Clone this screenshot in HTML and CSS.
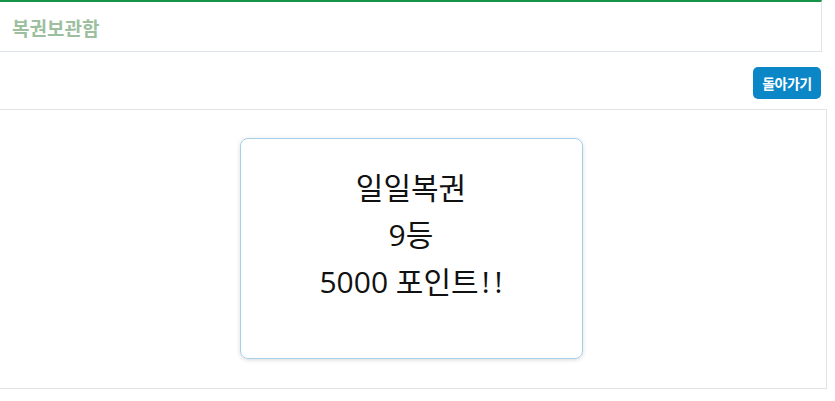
FILE: index.html
```html
<!DOCTYPE html>
<html lang="ko">
<head>
<meta charset="utf-8">
<link rel="stylesheet" href="styles.css">
</head>
<body>
<div class="page">
  <div class="head-box">
    <h1 class="title">복권보관함</h1>
  </div>
  <div class="actions">
    <button class="back-btn">돌아가기</button>
  </div>
  <div class="content-box">
    <div class="ticket">
      <p class="line">일일복권</p>
      <p class="line">9등</p>
      <p class="line">5000 포인트<span class="bang">!</span>!</p>
    </div>
  </div>
</div>
</body>
</html>
```

FILE: styles.css
```css
html, body {
  margin: 0;
  padding: 0;
  background: #fff;
}
body {
  font-family: "Open Sans", "Noto Sans CJK KR", sans-serif;
  color: #111;
}
.page {
  width: 827px;
}
.head-box {
  box-sizing: border-box;
  width: 822px;
  height: 52px;
  border-top: 2px solid #179447;
  border-right: 1px solid #dfe3ea;
  border-bottom: 1px solid #dfe3ea;
  display: flex;
  align-items: center;
  padding-left: 12px;
}
.title {
  margin: 0;
  padding-top: 1px;
  font-family: "Noto Sans CJK KR", sans-serif;
  font-size: 19px;
  font-weight: 700;
  color: #9dbf9f;
}
.actions {
  width: 822px;
  box-sizing: border-box;
  display: flex;
  justify-content: flex-end;
  padding-top: 15px;
  padding-right: 1px;
  height: 57px;
}
.back-btn {
  width: 68px;
  height: 32px;
  border: none;
  border-radius: 5px;
  background: #0b87c8;
  color: #fff;
  font-family: "Noto Sans CJK KR", sans-serif;
  font-size: 14px;
  font-weight: 700;
  letter-spacing: -0.5px;
  padding: 0;
}
.content-box {
  box-sizing: border-box;
  width: 827px;
  height: 280px;
  border-top: 1px solid #e3e3e3;
  border-right: 1px solid #e3e3e3;
  border-bottom: 1px solid #e3e3e3;
  display: flex;
  justify-content: center;
  padding-top: 28px;
  padding-right: 4px;
}
.ticket {
  box-sizing: border-box;
  width: 343px;
  height: 221px;
  border: 1px solid #a6cfe9;
  border-radius: 8px;
  box-shadow: 0 1px 4px rgba(0, 0, 0, 0.15);
  display: flex;
  flex-direction: column;
  align-items: center;
  padding-top: 25px;
}
.line {
  margin: 0;
  font-size: 30px;
  line-height: 47px;
  color: #111;
  white-space: nowrap;
}
.bang {
  margin-left: 3px;
  margin-right: 5px;
}
```
